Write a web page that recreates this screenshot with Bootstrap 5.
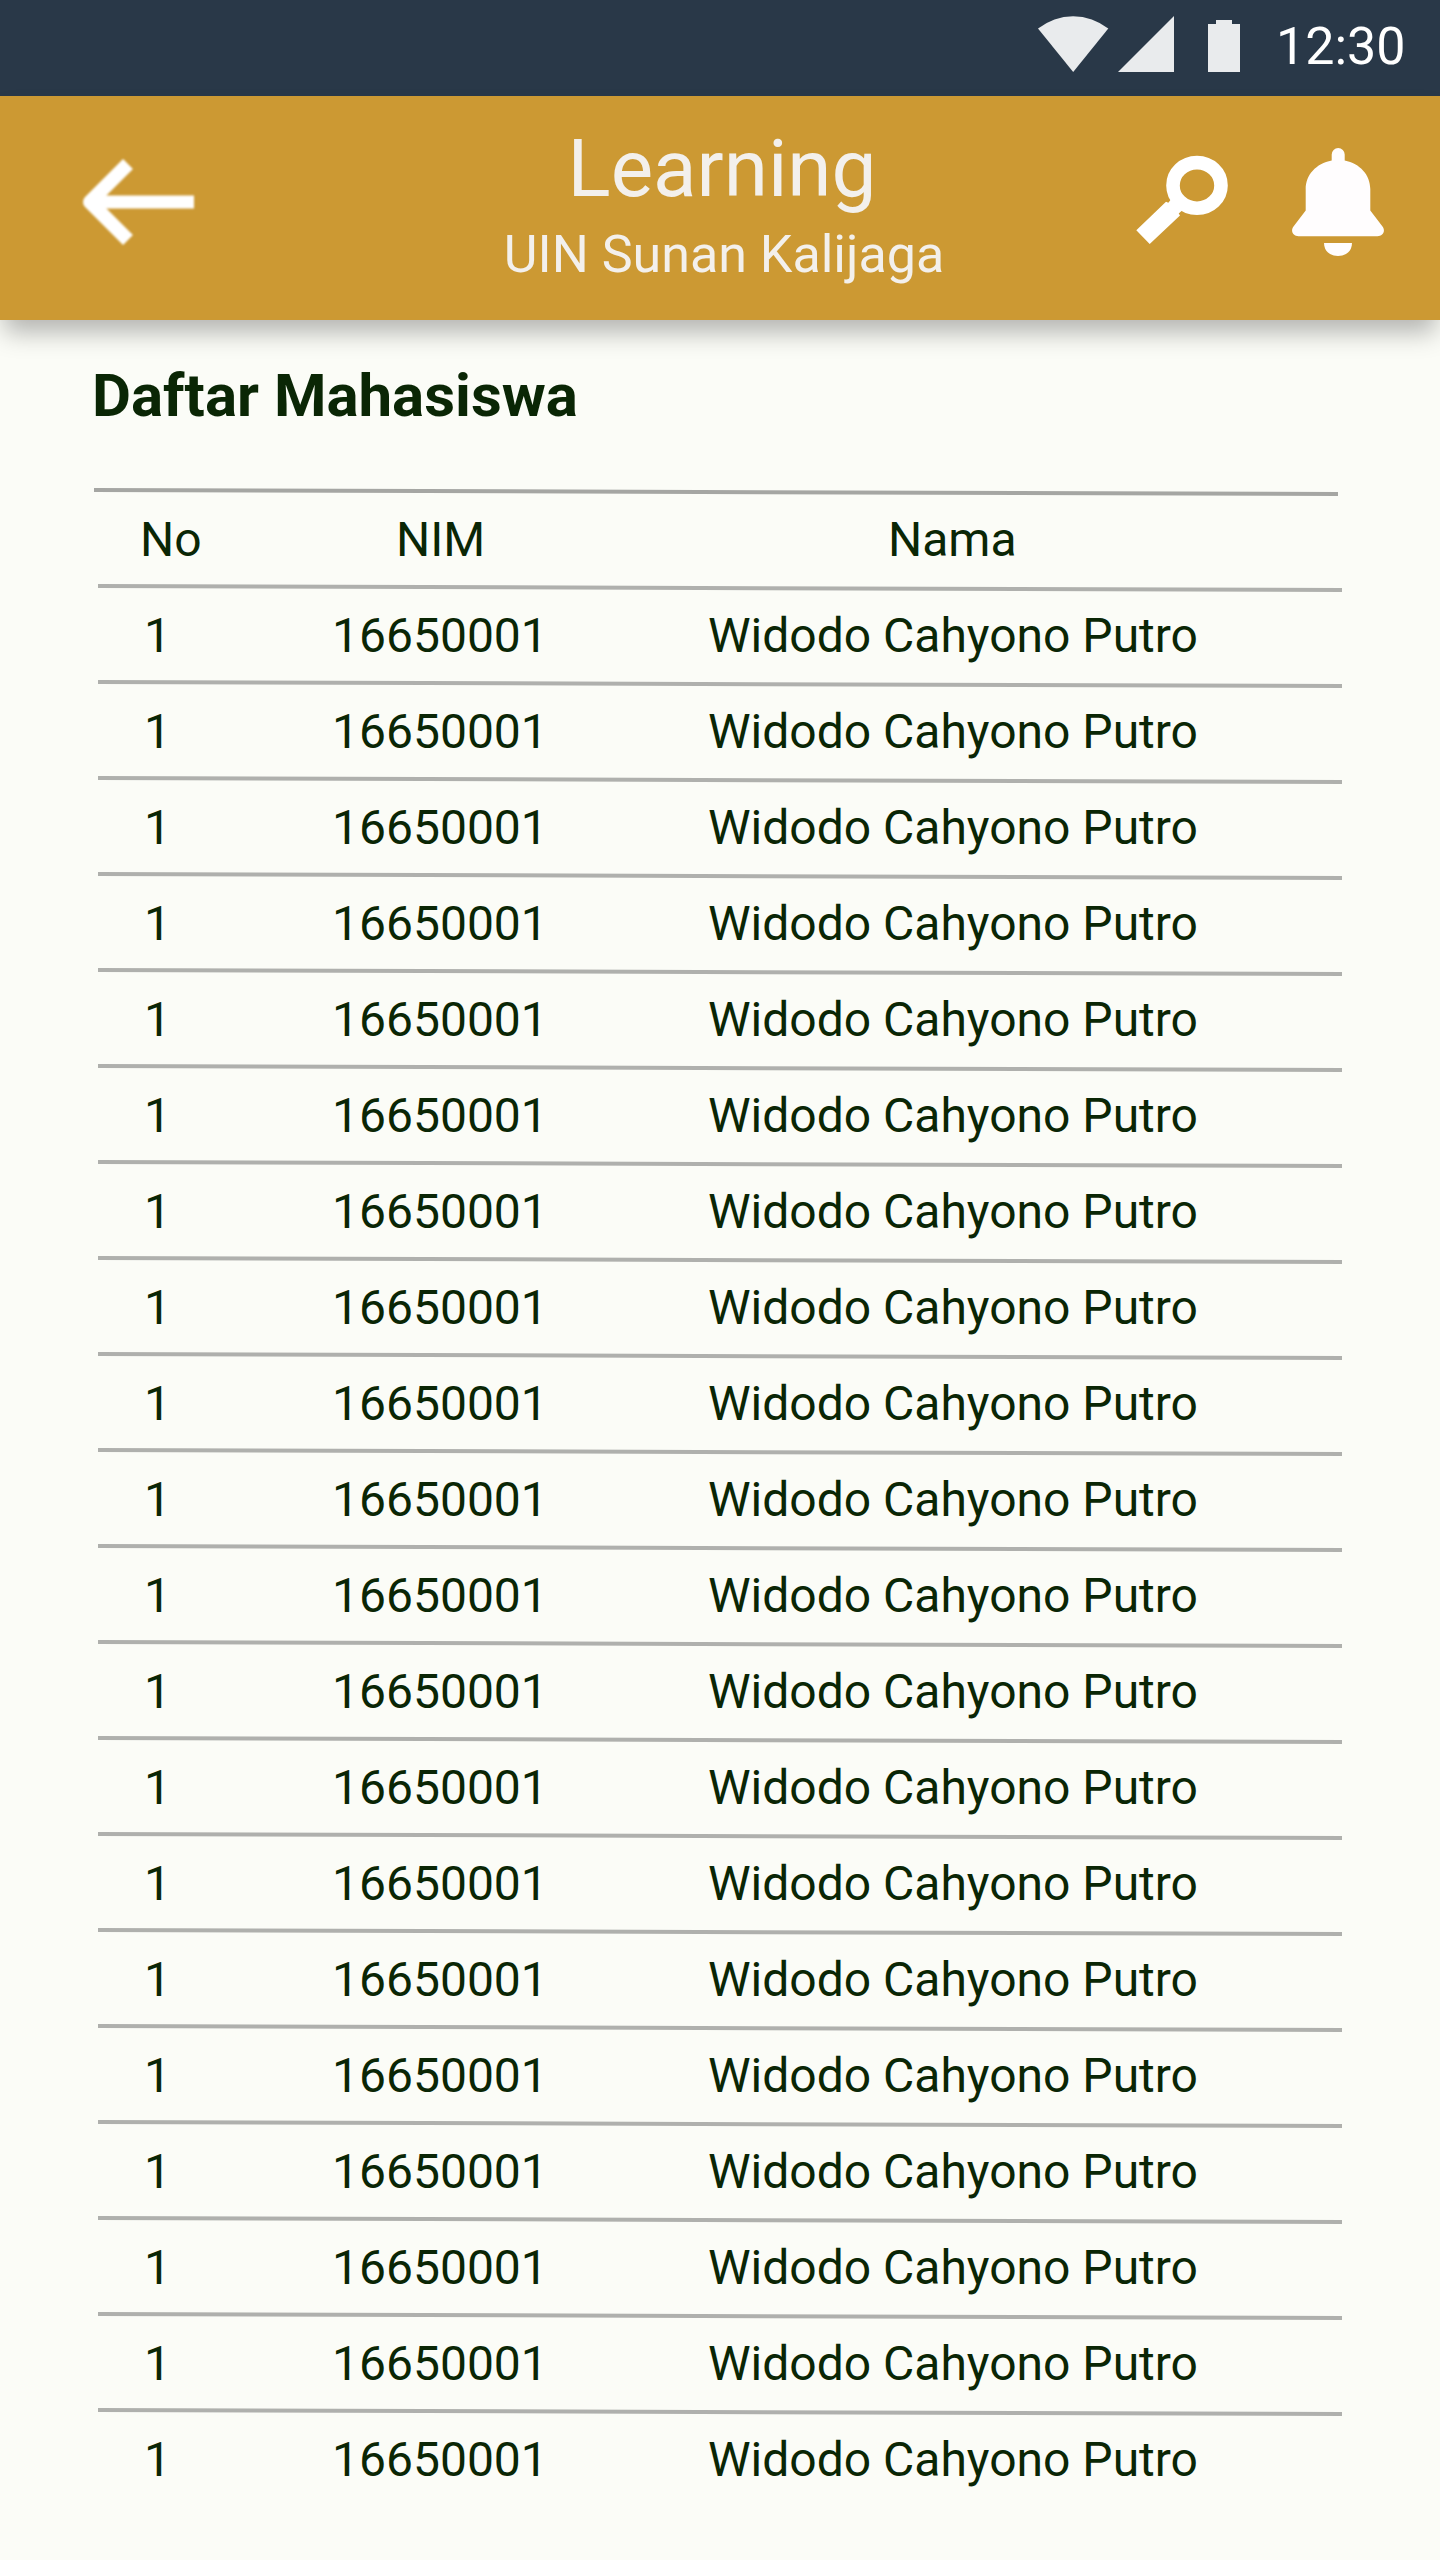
<!DOCTYPE html>
<html lang="id">
<head>
<meta charset="utf-8">
<meta name="viewport" content="width=device-width, initial-scale=1">
<title>Daftar Mahasiswa</title>
<link href="https://cdn.jsdelivr.net/npm/bootstrap@5.3.0/dist/css/bootstrap.min.css" rel="stylesheet">
<style>
body{font-family:Roboto,"Liberation Sans",sans-serif;background:#fbfcf7;color:#0a2605;overflow-x:hidden}
.screen{width:1440px;height:2560px}
.statusbar{height:96px;background:#293848;color:#fff;font-size:52px;padding-right:33px}
.statusbar .clock{line-height:94px;margin-left:30px;width:131px}
.appbar{height:224px;background:#cc9933;color:#f3f0ec;box-shadow:0 16px 24px -4px rgba(0,0,0,.29);padding:0 56px 0 82px}
.side{width:250px}
.appbar h1{font-size:80px;line-height:96px;font-weight:400;margin:0;padding:25px 22px 0 0}
.appbar .sub{font-size:52px;line-height:64px;padding:6px 18px 0 0}
.heading{font-size:60px;line-height:70px;font-weight:700;margin:0;padding:41px 0 0 92px}
.roster{padding:61px 98px 0}
.entry{height:96px;font-size:48px;line-height:96px}
.entry::before{content:"";position:absolute;left:0;top:-2px;width:1244px;height:4px;background:#afb0ad;transform:skewY(.1842deg)}
.entry.titles::before{left:-4px;background:#a5a6a3}
.c-no{width:234px;padding-left:46px}
.c-nim{width:376px}
.titles .c-no{padding-left:42px}
.titles .c-nim{padding-left:64px}
.titles .c-nama{padding-left:180px}
svg{display:block;flex:none}
</style>
</head>
<body>
<div class="screen d-flex flex-column">
  <div class="statusbar d-flex justify-content-end align-items-start">
    <svg width="210" height="96" viewBox="1036 0 210 96" fill="#e9ebed">
      <path d="M1038 28.6A56 56 0 0 1 1108.3 28.6L1073.2 72Z"/>
      <path d="M1118 72H1174V16Z"/>
      <path d="M1208 24H1216V20H1232V24H1240V72H1208Z"/>
    </svg>
    <div class="clock">12:30</div>
  </div>
  <header class="appbar d-flex justify-content-between position-relative">
    <div class="side">
      <svg width="116" height="224" viewBox="82 96 116 224" fill="none" stroke="#fff" style="filter:blur(1.3px);overflow:visible">
        <path d="M128 164L90 202L128 240" stroke-width="14" stroke-linejoin="round"/>
        <path d="M90 202H194" stroke-width="13"/>
      </svg>
    </div>
    <div class="text-center flex-grow-1">
      <h1>Learning</h1>
      <div class="sub">UIN Sunan Kalijaga</div>
    </div>
    <div class="side">
      <svg width="250" height="224" viewBox="1134 96 250 224" fill="#fff">
        <ellipse cx="1197" cy="185.400" rx="24" ry="22.800" fill="none" stroke="#fff" stroke-width="13.600"/>
        <path d="M1136.300 230.300L1149.700 244L1180 215.500L1178.700 213.500L1181.500 211L1186 206L1174 196L1170.300 200.300L1168.300 202.700L1166 201.700Z"/>
        <g fill="#fffdfe">
          <path d="M1331.700 160.500V154.500A6.500 6.500 0 0 1 1344.700 154.500V160.500C1360 163.500 1370.300 175 1370.300 189V210.500L1382.500 226.500C1386 231.500 1382.500 236.300 1377.500 236.300H1298.500C1293.500 236.300 1290 231.500 1293.500 226.500L1305.700 210.500V189C1305.700 175 1316 163.500 1331.700 160.500Z"/>
          <path d="M1324 243H1352C1352 251 1346 256 1338 256S1324 251 1324 243Z"/>
        </g>
      </svg>
    </div>
  </header>
  <main>
    <h2 class="heading">Daftar Mahasiswa</h2>
    <div class="roster" id="roster">
      <div class="entry titles d-flex position-relative">
        <div class="c-no">No</div><div class="c-nim">NIM</div><div class="c-nama">Nama</div>
      </div>
    </div>
  </main>
</div>
<script src="https://cdn.jsdelivr.net/npm/bootstrap@5.3.0/dist/js/bootstrap.bundle.min.js"></script>
<script>
const students = Array.from({length: 20}, () => ({no: 1, nim: '16650001', nama: 'Widodo Cahyono Putro'}));
document.getElementById('roster').insertAdjacentHTML('beforeend', students.map(s =>
  `<div class="entry d-flex position-relative"><div class="c-no">${s.no}</div><div class="c-nim">${s.nim}</div><div class="c-nama">${s.nama}</div></div>`).join(''));
</script>
</body>
</html>
